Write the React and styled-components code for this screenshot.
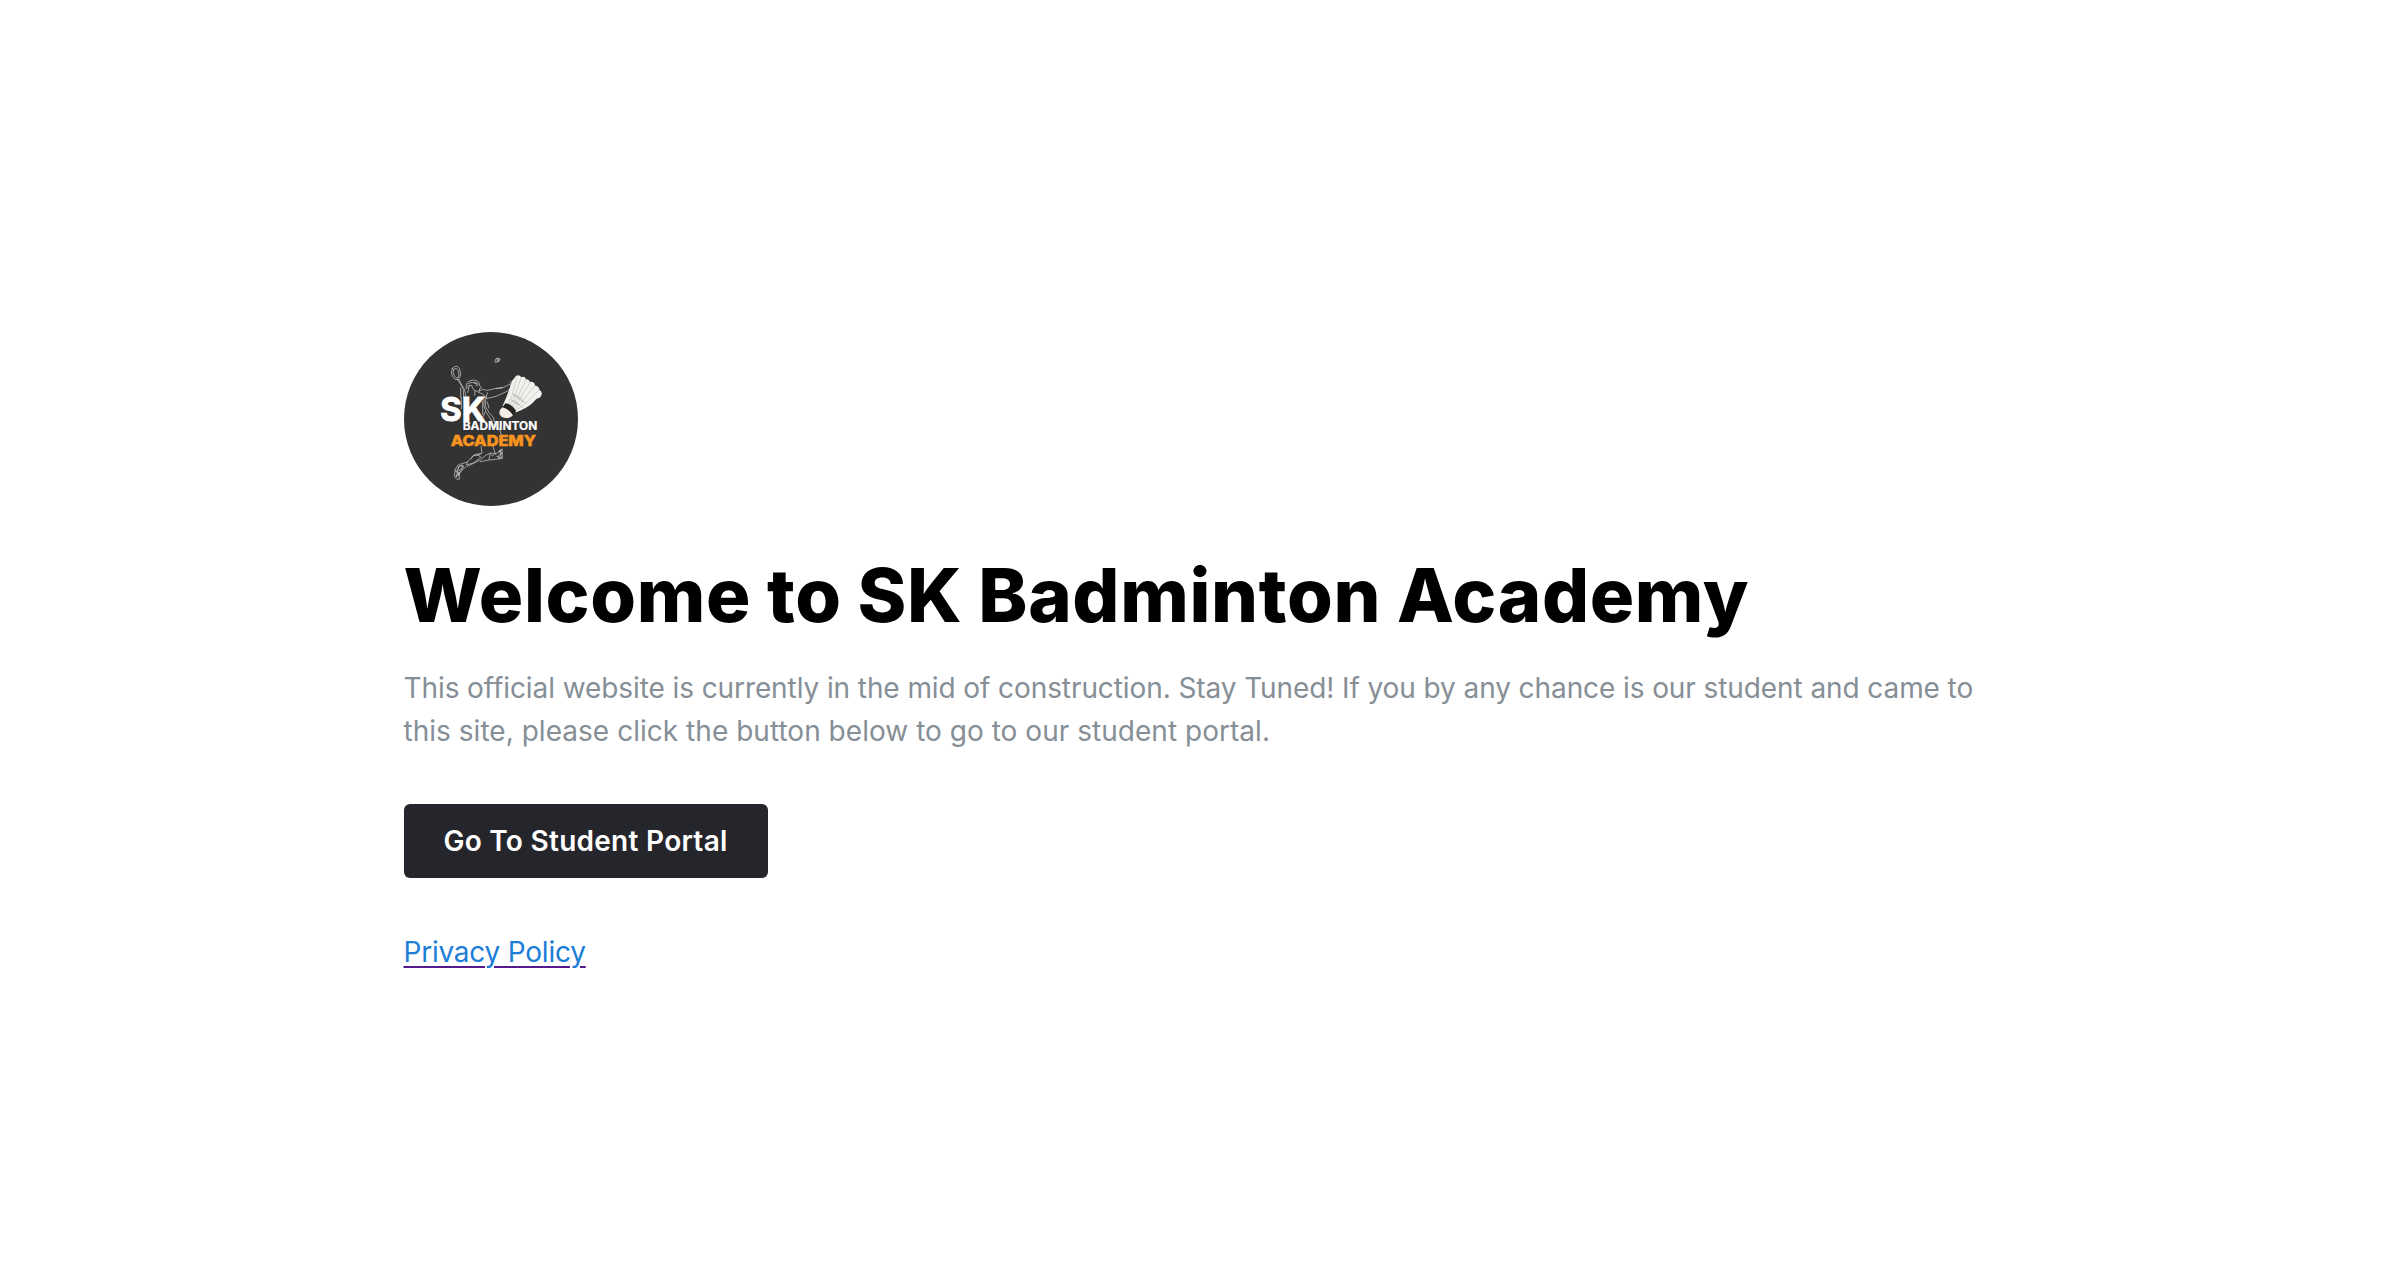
import React from "react";
import styled, { createGlobalStyle } from "styled-components";

const GlobalStyle = createGlobalStyle`
  * { box-sizing: border-box; }
  body {
    margin: 0;
    background: #fff;
    color: #000;
    font-family: Inter, "Liberation Sans", sans-serif;
  }
`;

const Page = styled.main`
  display: flex;
  flex-direction: column;
  align-items: flex-start;
  width: 1594px;
  margin: 0 auto;
  padding-top: 332px;
`;

const Logo = styled.svg`
  display: block;
  width: 174px;
  height: 174px;
`;

const Title = styled.h1`
  margin: 41px 0 0;
  font-size: 74px;
  font-weight: 850;
  line-height: 96px;
  letter-spacing: 0.67px;
  word-spacing: -1px;
  white-space: nowrap;
`;

const Description = styled.p`
  margin: 24px 0 0;
  color: #868e96;
  font-size: 28px;
  line-height: 43px;
`;

const Line = styled.span`
  display: block;
  letter-spacing: ${({ $tracking }) => $tracking}px;
  white-space: nowrap;
`;

const PortalButton = styled.button`
  width: 364px;
  height: 74px;
  margin-top: 51px;
  padding: 0;
  border: 0;
  border-radius: 6px;
  background: #25262b;
  color: #fff;
  font: 600 28px/1 Inter, "Liberation Sans", sans-serif;
  letter-spacing: 0.27px;
  white-space: nowrap;
`;

const PolicyLink = styled.a`
  margin-top: 53px;
  color: #1c7ed6;
  font-size: 28px;
  line-height: 43px;
  letter-spacing: -0.22px;
  text-decoration: underline #551a8b 2px;
  text-underline-offset: 4px;
`;

function AcademyLogo() {
  return (
    <Logo viewBox="27 22 522 522" role="img" aria-label="SK Badminton Academy">
      <circle cx="288" cy="283" r="261" fill="#333" />
      <g fill="none" stroke="#d6d6d6" strokeWidth="2" strokeLinejoin="round" strokeLinecap="round">
        <path d="M172 131q6-8 15-6 8 4 10 20 0 14-8 20-10 3-17-10-6-13 0-24zM176 134q9-7 14 4 5 15-2 23-8-2-12-11-3-9 0-16" />
        <path d="M188 165l6 9 11 20 1 24M191 164l10 18 7 11 4 20M197 190v28M199 218v34" />
        <path d="M214 192q-3-15 7-22 14-8 26-1 9 6 7 14l5 6-5 3-1 7-9 1-10-7M219 178q12-10 27 0M216 188q4-8 14-6l3 9M222 184l-4 20M236 174l10 1 3 5M243 182l4 1M240 198l-1 14" />
        <path d="M253 199l9-5 15 3 26-6 23-3 20-10M277 204l-4 18 30-7 33-15 12-11M250 203q17 3 24 18M303 192l19-2M344 178l7 12M346 169l9 15" />
        <path d="M272 222l-1 23 12 20 12 13 4 16 15 20 5 17M267 224q-4 19 6 38l19 29M263 230v40M277 232l5 18M270 263q-9 18-12 34M290 293l20 24" />
        <path d="M258 364l3 22-22 4-22 22-23 7M246 391l9-1M228 402l6-9 15-2 7 6M217 412l-3 9 21-6 24-18" />
        <path d="M294 365l7 22-15-2-13 6-17 15-39 19M282 405l3-18 8 7 8-9M256 411l27-5 39-5-1-28-10 7 11 6-11 6 1 11M302 389l20-15M305 395l14 4M315 377l3 20" />
        <path d="M190 420l-9 13-3 22 8 9 8-1-3-16 14-20-2-6-12 5-7 31M194 423l-9 17 9 11M181 439l12 9M188 454l12-16 13-13M183 456l10-13M198 423l7 2-13 13" />
        <path d="M301 105l6-5 9 4-4 6-10 3zM306 101l2 9M312 102l-5 9" />
      </g>
      <g>
        <path d="M363 154q6-4 13 0l2 4q6-4 12 0l2 6q7-2 11 4l2 4q9-2 14 5l1 6q8 0 12 7l1 5q7 4 8 12l-5 11-12 5q-19 23-49 35l-18 7-34-22q16-34 28-74z" fill="#f1f2ed" />
        <g fill="none" stroke="#bbc0b9" strokeWidth="2">
          <path d="M365 159l-15 57-13 26M378 159l-20 60-14 26M392 166l-27 57-16 25M406 172l-36 57-17 23M420 182l-43 54-20 19M433 195l-47 46-25 17" />
          <path d="M351 207l14 5 16 12 13 14M343 223l18 7 14 12 9 8" />
        </g>
        <path d="M354 218l5-8 4 8 6-4 2 10 7-3 2 9 7-1M347 231l6-4 5 8 6-3 4 9 7-2" fill="none" stroke="#a8afa9" strokeWidth="2" />
        <path d="M331 236q18 1 32 22l-7 15q-14-16-34-24z" fill="#25211f" />
        <path d="M322 248q18 3 32 24-7 9-22 8-17-2-19-15 1-11 9-17z" fill="#f5ece5" />
      </g>
      <g fontFamily="Inter, sans-serif">
        <text x="136" y="290" fill="#fff" stroke="#fff" strokeWidth="3" fontSize="100" fontWeight="700" textLength="135" lengthAdjust="spacingAndGlyphs">SK</text>
        <text x="203" y="317" fill="#fff" stroke="#fff" strokeWidth="0.5" fontSize="35" fontWeight="700" textLength="224" lengthAdjust="spacingAndGlyphs">BADMINTON</text>
        <text x="167" y="364" fill="#f7941e" stroke="#f7941e" strokeWidth="1.5" fontSize="45" fontWeight="850" textLength="256" lengthAdjust="spacingAndGlyphs">ACADEMY</text>
      </g>
    </Logo>
  );
}

export default function App() {
  return (
    <>
      <GlobalStyle />
      <Page>
        <AcademyLogo />
        <Title>Welcome to SK Badminton Academy</Title>
        <Description>
          <Line $tracking={-0.09}>
            This official website is currently in the mid of construction. Stay Tuned! If you by any chance is our student and came to
          </Line>
          <Line $tracking={0.03}>
            this site, please click the button below to go to our student portal.
          </Line>
        </Description>
        <PortalButton type="button">Go To Student Portal</PortalButton>
        <PolicyLink href="#">Privacy Policy</PolicyLink>
      </Page>
    </>
  );
}
